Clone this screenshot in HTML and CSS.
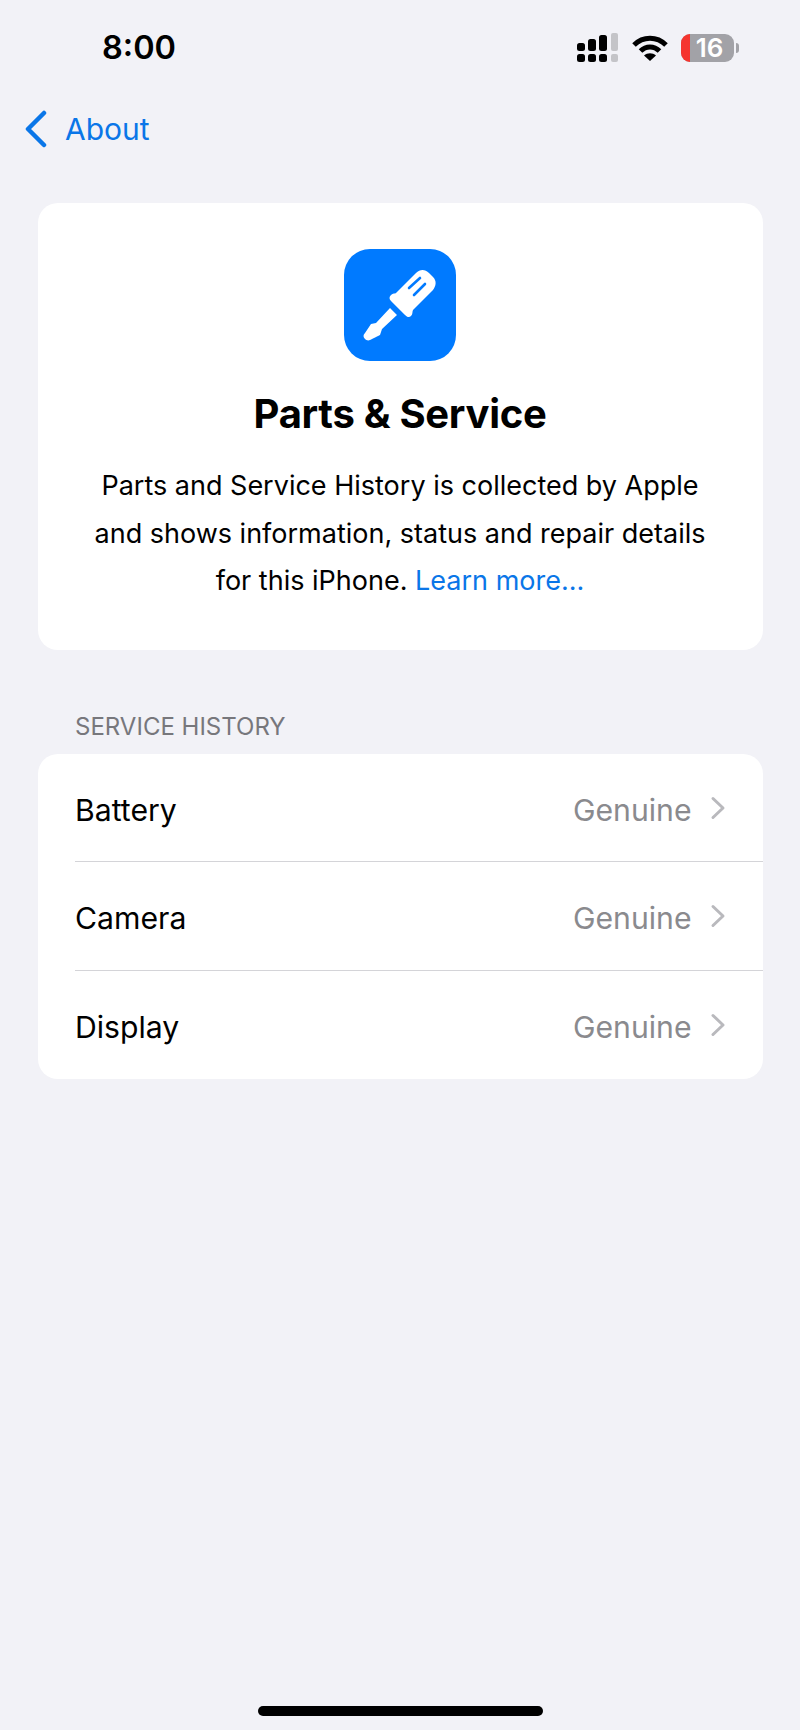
FILE: index.html
```html
<!DOCTYPE html>
<html lang="en">
<head>
<meta charset="utf-8">
<title>Parts &amp; Service</title>
<link rel="stylesheet" href="styles.css">
</head>
<body>
<div class="screen">
  <header class="status">
    <span class="time">8:00</span>
    <div class="status-icons">
      <svg class="signal" width="42" height="30" viewBox="0 0 42 30">
        <g fill="#000">
          <rect x="0" y="10" width="8" height="8" rx="2.5"/>
          <rect x="11" y="6" width="8" height="12" rx="2.5"/>
          <rect x="22" y="2" width="8" height="16" rx="2.5"/>
          <rect x="0" y="21" width="8" height="8" rx="2.5"/>
          <rect x="11" y="21" width="8" height="8" rx="2.5"/>
          <rect x="22" y="21" width="8" height="8" rx="2.5"/>
        </g>
        <g fill="#c4c4c8">
          <rect x="34" y="0" width="7" height="18" rx="2"/>
          <rect x="34" y="21" width="7" height="8" rx="2"/>
        </g>
      </svg>
      <svg class="wifi" width="36" height="26" viewBox="0 0 36 26">
        <g fill="none" stroke="#000" stroke-width="5">
          <path d="M2 10C11 1 25 1 34 10"/>
          <path d="M8.5 16C14 10.500 22 10.500 27.500 16"/>
        </g>
        <path d="M18 26L12 20.500C15.500 17.500 20.500 17.500 24 20.500Z" fill="#000"/>
      </svg>
      <div class="battery">
        <div class="battery-body">
          <span class="battery-level"></span>
          <span class="battery-num">16</span>
        </div>
        <span class="battery-cap"></span>
      </div>
    </div>
  </header>

  <nav class="nav">
    <svg class="back" width="24" height="38" viewBox="0 0 24 38">
      <path d="M20 3L4 19L20 35" fill="none" stroke="#0a76e8" stroke-width="4.500" stroke-linecap="round" stroke-linejoin="round"/>
    </svg>
    <span class="nav-label">About</span>
  </nav>

  <section class="card intro">
    <svg class="app-icon" width="112" height="112" viewBox="0 0 112 112">
      <rect width="112" height="112" rx="26" fill="#007aff"/>
      <g fill="#fff">
        <path d="M21 90C19 88 19 86 21 84L27 75L32 74L46 59L53 66L38 80L36 86L26 91C24 92 22 91 21 90Z"/>
        <path d="M47 46C49 44 51 45 52 44L72 24C76 20 81 20 85 24L89 28C93 32 92 37 89 41L69 61C68 63 69 65 67 67C65 69 63 68 61 66L47 52C45 50 45 48 47 46Z"/>
      </g>
      <g fill="none" stroke="#007aff" stroke-width="2.600" stroke-linecap="round">
        <path d="M65 39L76 29"/>
        <path d="M70 46L81 35"/>
      </g>
    </svg>
    <h1 class="title">Parts &amp; Service</h1>
    <p class="desc">Parts and Service History is collected by Apple<br>and shows information, status and repair details<br>for this iPhone. <a class="link">Learn more...</a></p>
  </section>

  <h2 class="section-head">SERVICE HISTORY</h2>

  <section class="card list">
    <div class="row">
      <span class="row-label">Battery</span>
      <span class="row-value">Genuine</span>
      <svg class="chev" width="16" height="24" viewBox="0 0 16 24"><path d="M3 2.500L13 12L3 21.500" fill="none" stroke="#b9b9bd" stroke-width="3" stroke-linecap="round" stroke-linejoin="round"/></svg>
    </div>
    <div class="row">
      <span class="row-label">Camera</span>
      <span class="row-value">Genuine</span>
      <svg class="chev" width="16" height="24" viewBox="0 0 16 24"><path d="M3 2.500L13 12L3 21.500" fill="none" stroke="#b9b9bd" stroke-width="3" stroke-linecap="round" stroke-linejoin="round"/></svg>
    </div>
    <div class="row">
      <span class="row-label">Display</span>
      <span class="row-value">Genuine</span>
      <svg class="chev" width="16" height="24" viewBox="0 0 16 24"><path d="M3 2.500L13 12L3 21.500" fill="none" stroke="#b9b9bd" stroke-width="3" stroke-linecap="round" stroke-linejoin="round"/></svg>
    </div>
  </section>

  <div class="home-bar"></div>
</div>
</body>
</html>
```

FILE: styles.css
```css
* { box-sizing: border-box; }
html, body { margin: 0; padding: 0; }
body {
  width: 800px;
  height: 1730px;
  background: #f2f2f7;
  font-family: Inter, "Liberation Sans", sans-serif;
  color: #000;
}
.screen {
  position: relative;
  width: 800px;
  height: 1730px;
  display: flex;
  flex-direction: column;
}
.status {
  height: 98px;
  padding: 25px 61px 0 102px;
  display: flex;
  justify-content: space-between;
  align-items: flex-start;
}
.time {
  font-size: 32.500px;
  font-weight: 600;
  line-height: 46px;
}
.status-icons {
  display: flex;
  align-items: center;
  gap: 13px;
  padding-top: 8px;
}
.battery { display: flex; align-items: center; gap: 2px; }
.battery-body {
  position: relative;
  width: 53px;
  height: 28px;
  border-radius: 9px;
  background: #a2a2a7;
  display: flex;
  align-items: center;
  justify-content: center;
  padding-left: 4px;
}
.battery-level {
  position: absolute;
  left: 0;
  top: 0;
  bottom: 0;
  width: 9px;
  background: #f5352f;
  border-radius: 9px 0 0 9px;
}
.battery-num {
  position: relative;
  color: #fff;
  font-size: 26px;
  font-weight: 600;
  line-height: 28px;
}
.battery-cap {
  width: 3px;
  height: 10px;
  background: #a2a2a7;
  border-radius: 0 3px 3px 0;
}
.nav {
  height: 62px;
  padding-left: 24px;
  display: flex;
  align-items: center;
  gap: 17px;
}
.nav-label {
  font-size: 30px;
  color: #0a76e8;
}
.card {
  margin: 0 37.500px;
  background: #fff;
  border-radius: 20px;
}
.intro {
  margin-top: 43px;
  height: 447px;
  padding-top: 46px;
  display: flex;
  flex-direction: column;
  align-items: center;
}
.title {
  margin: 26px 0 0;
  font-size: 40px;
  font-weight: 700;
  line-height: 54px;
  letter-spacing: -0.3px;
}
.desc {
  margin: 21px 0 0;
  font-size: 27px;
  line-height: 47.500px;
  text-align: center;
}
.link { color: #0a76e8; }
.section-head {
  margin: 63px 0 0;
  padding-left: 75px;
  font-size: 24px;
  font-weight: 400;
  line-height: 28px;
  color: #77777c;
  height: 40.500px;
}
.list { padding-left: 37.500px; }
.row {
  height: 108.500px;
  display: flex;
  align-items: center;
  border-bottom: 1px solid #d4d4d8;
  padding: 5px 37px 0 0;
}
.row:last-child { border-bottom: 0; }
.row-label {
  flex: 1;
  font-size: 30.200px;
}
.row-value {
  font-size: 30.200px;
  color: #8a8a8e;
  margin-right: 18px;
}
.chev { margin-top: -4px; }
.home-bar {
  position: absolute;
  left: 258px;
  top: 1706px;
  width: 285px;
  height: 10px;
  border-radius: 5px;
  background: #000;
}
```
